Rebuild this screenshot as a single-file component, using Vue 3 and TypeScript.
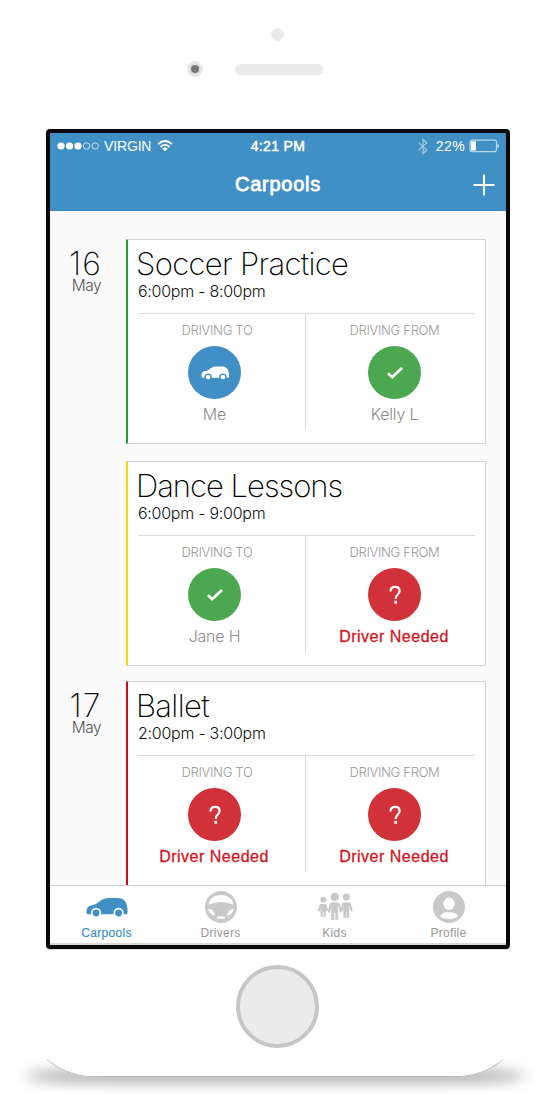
<script setup lang="ts">
type Status = 'me' | 'ok' | 'needed'
interface Leg { label: string; kind: 'to' | 'from'; status: Status; name: string; cls: string }
interface Carpool { day?: string; title: string; tcls: string; time: string; color: string; legs: Leg[] }

const to = (status: Status, name: string, cls: string): Leg => ({ label: 'DRIVING TO', kind: 'to', status, name, cls })
const from = (status: Status, name: string, cls: string): Leg => ({ label: 'DRIVING FROM', kind: 'from', status, name, cls })

const carpools: Carpool[] = [
  { day: '16', title: 'Soccer Practice', tcls: 'soccer', time: '6:00pm - 8:00pm', color: 'green', legs: [to('me', 'Me', 'plain'), from('ok', 'Kelly L', 'plain')] },
  { title: 'Dance Lessons', tcls: 'dance', time: '6:00pm - 9:00pm', color: 'yellow', legs: [to('ok', 'Jane H', 'plain'), from('needed', 'Driver Needed', 'alert')] },
  { day: '17', title: 'Ballet', tcls: 'ballet', time: '2:00pm - 3:00pm', color: 'red', legs: [to('needed', 'Driver Needed', 'alert'), from('needed', 'Driver Needed', 'alert')] },
]
const tabs = ['Carpools', 'Drivers', 'Kids', 'Profile']
</script>

<template>
  <div class="page">
    <div class="shadow"></div>
    <div class="phone">
      <div class="top">
        <i class="sensor"></i>
        <div class="ear"><i class="camera"></i><i class="speaker"></i></div>
      </div>
      <div class="screen">
        <header>
          <div class="status">
            <div class="carrier">
              <svg width="42" height="10" viewBox="0 0 42 10">
                <g fill="#fff"><circle cx="4" cy="5" r="3.6" /><circle cx="12.5" cy="5" r="3.6" /><circle cx="21" cy="5" r="3.6" /></g>
                <g fill="none" stroke="#d3e5f1" stroke-width=".9"><circle cx="29.6" cy="5" r="3.2" /><circle cx="38.2" cy="5" r="3.2" /></g>
              </svg>
              <span class="virgin">VIRGIN</span>
              <svg class="wifi" width="16" height="12" viewBox="0 0 16 12">
                <g fill="none" stroke="#fff" stroke-width="1.7"><path d="M1 4.2Q8-2.2 15 4.2" /><path d="M3.5 7Q8 2.9 12.5 7" /></g>
                <path d="M5.2 8.5Q8 6.4 10.8 8.5L8 11.3Z" fill="#fff" />
              </svg>
            </div>
            <b>4:21 PM</b>
            <div class="power">
              <svg width="10" height="17" viewBox="0 0 10 17" fill="none" stroke="#a8cbe3" stroke-width="1.1"><path d="M.8 4.8L8.7 12L5 15.6V1.3L8.7 4.8L.8 12" /></svg>
              <span>22%</span>
              <svg width="31" height="14" viewBox="0 0 31 14">
                <rect x="1" y="1.2" width="26.5" height="11.4" rx="2" fill="none" stroke="#b7d5e9" stroke-width="1.2" />
                <rect x="2" y="2.3" width="5" height="9.2" fill="#fff" /><path d="M28.5 4.6Q31.4 6.9 28.5 9.2Z" fill="#e8f1f8" />
              </svg>
            </div>
          </div>
          <div class="bar"><h1>Carpools</h1>
            <svg width="22" height="22" viewBox="0 0 22 22" stroke="#fff" stroke-width="1.9"><path d="M.4 11H21.6M11 .4V21.6" /></svg>
          </div>
        </header>
        <main>
          <section v-for="c in carpools" :key="c.title">
            <div class="date"><template v-if="c.day"><strong>{{ c.day }}</strong><span>May</span></template></div>
            <article :class="c.color">
              <h2 :class="c.tcls">{{ c.title }}</h2>
              <p class="time">{{ c.time }}</p>
              <div class="legs">
                <div v-for="l in c.legs" :key="l.kind" class="leg" :class="l.kind">
                  <span class="label">{{ l.label }}</span>
                  <div class="dot" :class="l.status">
                    <svg v-if="l.status === 'me'" width="28" height="14" viewBox="0 0 41 20">
                      <path d="M1 15.5Q-.4 9 5 7.5L10 6.3Q16 .3 22 .3H31Q38 .3 40 7Q42 14 40.5 17H2Q1.2 16.5 1 15.5Z" fill="#fff" />
                      <g fill="#fff" stroke="#4190c5" stroke-width="2"><circle cx="10.4" cy="16" r="4.4" /><circle cx="32.1" cy="16" r="4.4" /></g>
                    </svg>
                    <svg v-else-if="l.status === 'ok'" width="18" height="14" viewBox="0 0 18 14" fill="none" stroke="#fff" stroke-width="2.7"><path d="M2 7.2L6.2 11.2L16 1.9" /></svg>
                    <svg v-else width="14" height="20" viewBox="0 0 14 20"><path d="M2.5 6.5C2.5 3.4 4.2 1.9 7.1 1.9S11.6 3.5 11.6 6C11.6 9.3 7.7 9.2 7.7 13.9" fill="none" stroke="#fff" stroke-width="2.2" /><path d="M6.4 15.8H9.1V18.7H6.4Z" fill="#fff" /></svg>
                  </div>
                  <span class="name" :class="l.cls">{{ l.name }}</span>
                </div>
              </div>
            </article>
          </section>
        </main>
        <nav>
          <div v-for="(t, i) in tabs" :key="t" :class="{ active: i === 0 }">
            <svg v-if="i === 0" width="42" height="34" viewBox="0 0 42 34">
              <path d="M.7 23.5Q-.4 17 5 15.5L10 14Q16.5 8 22 8H32Q39 8 40.8 15Q42.4 22 41 24.2H2Q.9 24.2 .7 23.5Z" fill="#4190c5" />
              <g fill="#4190c5" stroke="#fff" stroke-width="1.7"><circle cx="10" cy="23" r="4.3" /><circle cx="32.6" cy="23" r="4.3" /></g>
            </svg>
            <svg v-else-if="i === 1" width="34" height="34" viewBox="0 0 34 34">
              <circle cx="17" cy="17" r="16" fill="#c9c9c9" />
              <g fill="#fff"><path d="M4.5 14.8C5.5 8.3 10.5 5 17 5S28.5 8.3 29.5 14.8Q24 11.9 17 11.9T4.5 14.8Z" /><path d="M4.2 19Q9.5 18.4 11 25.8Q5.4 24.7 4.2 19ZM29.8 19Q24.5 18.4 23 25.8Q28.6 24.7 29.8 19Z" /><ellipse cx="17" cy="27.6" rx="4.3" ry="1.4" /></g>
            </svg>
            <svg v-else-if="i === 2" width="36" height="34" viewBox="0 0 36 34" fill="#c9c9c9" stroke="#c9c9c9" stroke-linecap="round" stroke-linejoin="round">
              <g stroke="none"><circle cx="6.3" cy="9.8" r="3" /><circle cx="17.8" cy="6.9" r="4.2" /><circle cx="29.3" cy="7.1" r="3.6" /></g>
              <g stroke-width="2.1" fill="none"><path d="M3.6 15.2L1.7 20.7M8.8 15.2L10 20M26 13.8L24.8 20M32.6 13.5L34.6 20.5M13.7 14L11.9 21.8M21.9 14L23.8 21.8" /></g>
              <g stroke-width=".8"><path d="M4.2 14.6H8.4V26.5H7V21.5H5.6V26.5H4.2ZM27 12.8H31.9V27.5H30V21.5H28.8V27.5H27ZM14.8 12.8H20.8V29.7H18.8V22.5H16.8V29.7H14.8Z" /></g>
            </svg>
            <svg v-else width="34" height="34" viewBox="0 0 34 34"><circle cx="17" cy="17" r="16" fill="#c9c9c9" /><ellipse cx="17" cy="13.8" rx="5.6" ry="6.2" fill="#fff" /><path d="M8.4 26.6C8.4 23.6 12.4 22.2 17 22.2S25.6 23.6 25.6 26.6C23.2 28.4 20.2 29.3 17 29.3S10.8 28.4 8.4 26.6Z" fill="#fff" /></svg>
            <span>{{ t }}</span>
          </div>
        </nav>
      </div>
      <div class="home"></div>
    </div>
  </div>
</template>

<style>
html, body { background: #fff; }
</style>
<style scoped>
* { box-sizing: border-box; }
svg { display: block; flex: none; }
.page { position: relative; width: 550px; height: 1094px; overflow: hidden; font-family: "Liberation Sans", Arial, sans-serif; }
.shadow { position: absolute; left: 25px; right: 24px; top: 1070px; height: 12px; border-radius: 80px / 6px; background: #a0a0a0; filter: blur(7px); }
.phone { position: relative; width: 504px; height: 1077px; margin: 0 23px; background: #fff; border-radius: 0 0 70px 70px; }
.phone::after { content: ""; position: absolute; left: 0; right: 0; bottom: 0; height: 140px; border-radius: 0 0 70px 70px; border-bottom: 1px solid #b9b9b9; clip-path: inset(0 24px); pointer-events: none; }
.top { height: 129px; padding-top: 28px; }
.sensor { display: block; width: 13px; height: 13px; border-radius: 50%; background: #ebebeb; margin-left: 248px; }
.ear { display: flex; align-items: center; margin: 20px 0 0 164px; height: 16px; }
.camera { width: 16px; height: 16px; border-radius: 50%; background: #787878; border: 3px solid #e9e9e9; box-shadow: inset 0 0 0 1px #f1f1f1; }
.speaker { width: 88px; height: 11px; border-radius: 6px; background: #ebebeb; margin-left: 32px; }
.screen { width: 464px; height: 820px; margin-left: 23px; border: 4px solid #080808; border-radius: 4px; background: #fafafa; display: flex; flex-direction: column; overflow: hidden; box-shadow: 0 1px 0 #ddd; }
header { background: #4190c5; height: 78px; flex: none; color: #fff; border-bottom: 1px solid #3584ba; }
.status { display: grid; grid-template-columns: 1fr auto 1fr; align-items: center; height: 26px; font-size: 14px; padding: 0 6px 0 7px; line-height: 26px; }
.status b { font-size: 14px; font-weight: 400; -webkit-text-stroke: .5px #fff; letter-spacing: .35px; margin-left: -1px; }
.carrier, .power { display: flex; align-items: center; }
.virgin { margin-left: 5px; letter-spacing: -.15px; }
.wifi { margin-left: 6px; }
.power { justify-content: flex-end; }
.power span { margin: 0 4px 0 8px; letter-spacing: .4px; }
.bar { position: relative; height: 51px; }
h1 { margin: 0; text-align: center; font-size: 20px; line-height: 51px; font-weight: 400; -webkit-text-stroke: .8px #fff; letter-spacing: .75px; }
.bar svg { position: absolute; right: 11px; top: 15px; }
main { flex: 1; min-height: 0; overflow: hidden; padding-top: 28px; }
section { display: flex; height: 205px; margin-bottom: 17px; }
section:nth-child(2) { margin-bottom: 15px; }
.date { width: 76px; text-align: center; display: flex; flex-direction: column; padding: 11px 5px 0 0; font-family: Inter, sans-serif; font-weight: 300; color: #111; }
.date strong { font-weight: 200; font-size: 32px; line-height: 28px; letter-spacing: 1px; }
.date span { font-size: 15.5px; line-height: 16px; color: #555; letter-spacing: -.5px; padding-left: 2px; }
article { width: 360px; background: #fff; border: 1px solid #d5d5d5; border-left-width: 2px; padding: 6px 10px 0; }
.green { border-left-color: #25a12e; }
.yellow { border-left-color: #fbd709; }
.red { border-left-color: #d1091b; }
h2 { margin: 0 0 0 -2px; font: 200 31px/36px Inter, sans-serif; color: #000; white-space: nowrap; letter-spacing: -.65px; }
h2.dance { letter-spacing: -1px; }
.time { margin: 0; font: 300 16px/18px Inter, sans-serif; color: #111; height: 31px; letter-spacing: -.26px; white-space: nowrap; }
.legs { display: flex; border-top: 1px solid #dcdcdc; height: 117px; width: 337px; }
.leg { width: 168px; display: flex; flex-direction: column; align-items: center; }
.leg.to { border-right: 1px solid #dcdcdc; padding-right: 14px; }
.leg.from { padding-left: 9px; }
.label { font: 300 13px/16px Inter, sans-serif; color: #999; margin-top: 8px; letter-spacing: -.32px; white-space: nowrap; }
.to .label { padding-left: 5px; }
.dot { width: 53px; height: 53px; border-radius: 50%; margin-top: 8px; display: flex; align-items: center; justify-content: center; flex: none; }
.dot.me { background: #4190c5; }
.dot.ok { background: #4ba850; }
.dot.needed { background: #d13138; }
.name { margin-top: 6px; line-height: 20px; white-space: nowrap; }
.plain { margin-top: 5px; font: 300 16px/20px Inter, sans-serif; color: #8c8c8c; letter-spacing: -.2px; }
.alert { font-size: 16px; color: #d01422; -webkit-text-stroke: .3px #d01422; letter-spacing: .5px; margin-left: -1px; }
nav { display: flex; height: 60px; flex: none; background: #fff; border-top: 1px solid #cfcfcf; border-bottom: 2px solid #d8d8d8; }
nav div { flex: 1; display: flex; flex-direction: column; align-items: center; padding: 4px 1px 0 0; }
nav span { font-size: 12px; line-height: 16px; margin-top: 1px; color: #999; letter-spacing: .3px; }
nav .active span { color: #4190c5; -webkit-text-stroke: .2px #4190c5; }
.home { width: 83px; height: 83px; border-radius: 50%; background: #ebebeb; border: 4px solid #c6c6c6; margin: 16px 0 0 213px; }
</style>
